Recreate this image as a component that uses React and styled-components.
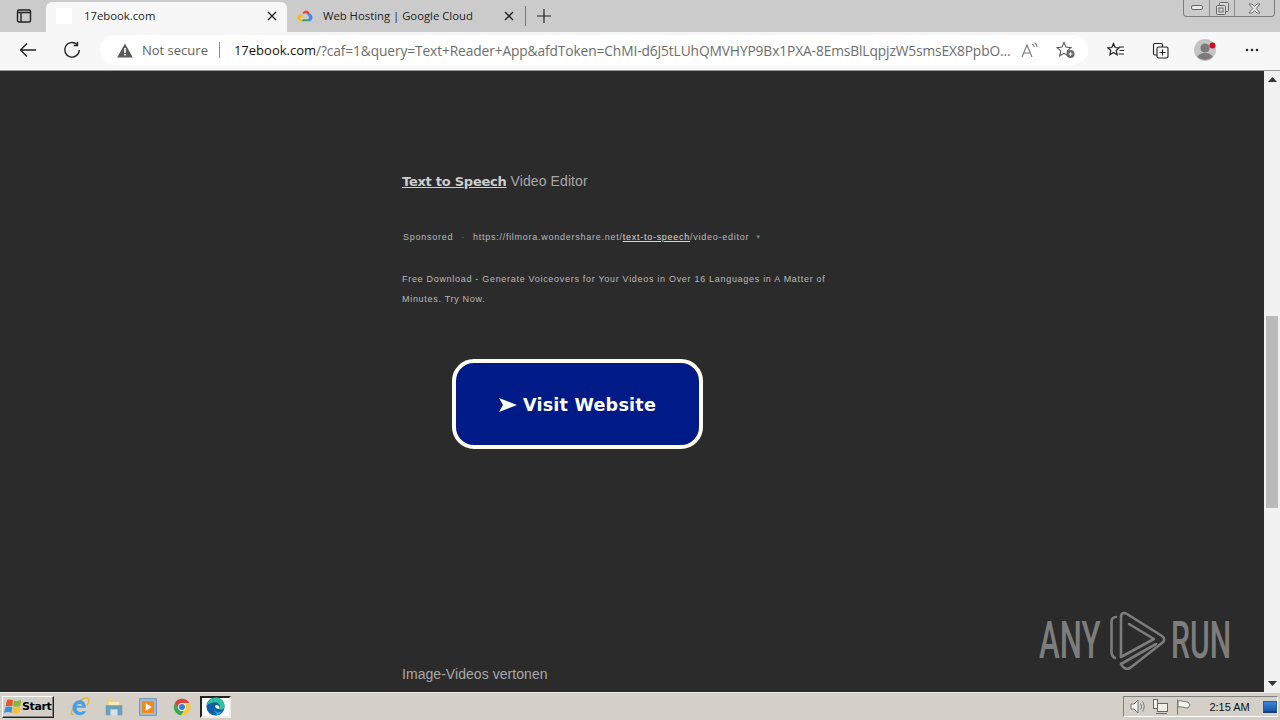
import React from "react";
import styled, { createGlobalStyle } from "styled-components";

const Global = createGlobalStyle`
  html, body {
    margin: 0;
    padding: 0;
    height: 100%;
    overflow: hidden;
    background: #2b2b2b;
  }
  * {
    box-sizing: border-box;
  }
`;

const Screen = styled.div`
  width: 1280px;
  height: 720px;
  display: flex;
  flex-direction: column;
  font-family: "Liberation Sans", Arial, sans-serif;
  overflow: hidden;
`;

const TabStrip = styled.div`
  height: 32px;
  background: #cbcbcb;
  display: flex;
  align-items: flex-end;
  padding-left: 8px;
  position: relative;
`;

const TabAction = styled.div`
  width: 32px;
  height: 30px;
  margin-right: 6px;
  padding-bottom: 3px;
  display: flex;
  align-items: center;
  justify-content: center;
  flex-shrink: 0;
`;

const Tab = styled.div`
  width: ${(p) => p.$w}px;
  height: 30px;
  display: flex;
  align-items: center;
  flex-shrink: 0;
  padding: 0 10px 3px;
  border-radius: 6px 6px 0 0;
  background: ${(p) => (p.$active ? "#f7f7f7" : "transparent")};
  color: #222;
  font-family: "Open Sans", sans-serif;
  font-size: 11.3px;
`;

const TabFavicon = styled.div`
  width: 16px;
  height: 16px;
  flex-shrink: 0;
  background: ${(p) => p.$bg || "transparent"};
  margin-right: ${(p) => p.$gap}px;
  display: flex;
`;

const TabTitle = styled.span`
  flex: 1;
  white-space: nowrap;
`;

const TabDivider = styled.div`
  width: 1px;
  height: 20px;
  margin: 0 0 6px 1px;
  background: #777;
  flex-shrink: 0;
`;

const NewTab = styled.div`
  width: 36px;
  height: 30px;
  padding-bottom: 3px;
  display: flex;
  align-items: center;
  justify-content: center;
`;

const WindowControls = styled.div`
  position: absolute;
  top: 0;
  right: 5px;
  width: 92px;
  height: 17px;
  display: grid;
  grid-template-columns: 25px 25px 1fr;
  border: 1px solid #7c7c7c;
  border-top: none;
  border-radius: 0 0 4px 4px;
`;

const WindowButton = styled.div`
  display: flex;
  align-items: center;
  justify-content: center;
  border-left: ${(p) => (p.$first ? "none" : "1px solid #8c8c8c")};
`;

const Toolbar = styled.div`
  height: 39px;
  background: #f7f7f7;
  border-bottom: 1px solid #9a9a9a;
  display: flex;
  align-items: center;
  padding: 0 12px 2px 12px;
`;

const ToolButton = styled.div`
  width: ${(p) => p.$w || 32}px;
  margin-left: ${(p) => p.$ml || 0}px;
  margin-right: ${(p) => p.$mr || 0}px;
  height: 30px;
  display: flex;
  align-items: center;
  justify-content: center;
  flex-shrink: 0;
`;

const AddressBar = styled.div`
  width: 988px;
  height: 30px;
  margin: 0 12px 0 12px;
  flex-shrink: 0;
  background: #fff;
  border-radius: 15px;
  display: flex;
  align-items: center;
  padding: 0 3px 0 17px;
  font-family: "Open Sans", sans-serif;
  font-size: 13px;
  white-space: nowrap;
`;

const NotSecure = styled.span`
  color: #5f5f5f;
  font-size: 13px;
  margin-left: 9px;
`;

const AddressDivider = styled.div`
  width: 1px;
  height: 16px;
  background: #8d8d8d;
  margin: 0 14px 0 11px;
`;

const Host = styled.span`
  color: #111;
`;

const Query = styled.span`
  color: #6d6d6d;
  flex: 1;
  overflow: hidden;
  font-size: 13.75px;
  letter-spacing: -0.11px;
`;

const Main = styled.div`
  flex: 1;
  min-height: 0;
  display: flex;
  position: relative;
`;

const Page = styled.div`
  flex: 1;
  background: #2b2b2b;
  padding: 101px 0 0 402px;
  color: #cfcfcf;
`;

const Headline = styled.div`
  font-size: 14px;
  line-height: 18px;
  letter-spacing: 0.1px;
  color: #a8a8a8;
`;

const HeadLink = styled.a`
  font-family: "DejaVu Sans", sans-serif;
  font-size: 13px;
  font-weight: 700;
  letter-spacing: -0.25px;
  color: #cdcdcd;
  text-decoration: underline;
`;

const MetaRow = styled.div`
  margin-top: 37px;
  padding-left: 1px;
  display: flex;
  align-items: center;
  height: 18px;
  font-size: 9px;
  letter-spacing: 0.74px;
  color: #b9b9b9;
  white-space: nowrap;
`;

const Dot = styled.span`
  margin: 0 8px;
  color: #777;
`;

const UrlLink = styled.span`
  color: #d6d6d6;
  text-decoration: underline;
`;

const Caret = styled.span`
  margin-left: 6px;
  font-size: 6px;
  color: #6f8a80;
`;

const Description = styled.p`
  margin: 23px 0 0;
  width: 432px;
  font-size: 9px;
  letter-spacing: 0.7px;
  line-height: 20px;
  color: #b9b9b9;
`;

const VisitButton = styled.a`
  margin: 50px 0 0 50px;
  width: 251px;
  height: 90px;
  padding-top: 2px;
  background: #001a87;
  border: 4px solid #fffdf2;
  border-radius: 22px;
  display: flex;
  align-items: center;
  justify-content: center;
  color: #fff;
  font-family: "DejaVu Sans", sans-serif;
  font-weight: 700;
  font-size: 17.6px;
  letter-spacing: 0.2px;
`;

const Arrow = styled.svg`
  margin-right: 6px;
`;

const BottomLink = styled.div`
  margin-top: 216px;
  font-size: 14px;
  line-height: 18px;
  letter-spacing: 0.05px;
  color: #a8a8a8;
`;

const Scrollbar = styled.div`
  width: 16px;
  background: #f1f1f1;
  display: flex;
  flex-direction: column;
  align-items: center;
  position: relative;
`;

const ScrollArrow = styled.div`
  height: 17px;
  display: flex;
  align-items: center;
  justify-content: center;
`;

const ScrollTrack = styled.div`
  flex: 1;
  width: 100%;
  padding: 228px 2px 167px;
  display: flex;
`;

const ScrollThumb = styled.div`
  flex: 1;
  background: #bababa;
`;

const Watermark = styled.div`
  position: absolute;
  left: 1039px;
  top: 539px;
  display: flex;
  align-items: center;
  color: #7d7d7d;
  font-family: "Roboto", sans-serif;
  font-weight: 500;
  font-size: 52px;
  line-height: 62px;
  height: 62px;
`;

const MarkWord = styled.span`
  display: inline-block;
  width: ${(p) => p.$w}px;
  margin-left: ${(p) => p.$ml || 0}px;
  transform: scaleX(${(p) => p.$scale});
  transform-origin: left center;
  white-space: nowrap;
`;

const Taskbar = styled.div`
  height: 28px;
  background: #d4d0c8;
  border-top: 1px solid #efede7;
  display: flex;
  align-items: center;
  padding: 0 2px;
  position: relative;
`;

const StartButton = styled.div`
  width: 52px;
  height: 22px;
  display: flex;
  align-items: center;
  gap: 0;
  padding-left: 1px;
  background: #d4d0c8;
  border: 1px solid;
  border-color: #fff #222 #222 #fff;
  box-shadow: inset -1px -1px 0 #808080;
  font-family: "DejaVu Sans", sans-serif;
  font-weight: 700;
  font-size: 11px;
  color: #000;
  letter-spacing: -0.4px;
`;

const QuickIcons = styled.div`
  display: flex;
  align-items: center;
  margin-left: 9px;
`;

const QuickIcon = styled.div`
  width: ${(p) => (p.$active ? 31 : 34)}px;
  height: ${(p) => (p.$active ? 22 : 24)}px;
  display: flex;
  align-items: center;
  justify-content: center;
  ${(p) =>
    p.$active &&
    `
    background: #fff;
    border: 2px solid;
    border-color: #222 #efede7 #efede7 #222;
    margin-left: 1px;
  `}
`;

const Tray = styled.div`
  margin-left: auto;
  width: 155px;
  height: 21px;
  border: 1px solid;
  border-color: #808080 #fff #fff #808080;
  display: flex;
  align-items: center;
  padding-left: 5px;
  gap: 5px;
`;

const TrayIcon = styled.div`
  width: 20px;
  height: 16px;
  display: flex;
  align-items: center;
  justify-content: center;
`;

const Clock = styled.span`
  margin-left: 13px;
  font-size: 11px;
  font-family: "Liberation Sans", sans-serif;
  color: #111;
  white-space: nowrap;
`;

const Desktop = styled.div`
  width: 16px;
  height: 12px;
  margin-left: 8px;
  background: linear-gradient(#3a86d8, #1a56a8);
  border: 1px solid #2a5d96;
  border-bottom: 2px solid #1f3f70;
`;

const GoogleCloud = () => (
  <svg width="17" height="16" viewBox="0 0 24 22">
    <path d="M8 6 L12 3 C15 2 18 4 19 7 L16 9 C15 7 12 6 10 8z" fill="#ea4335" />
    <path d="M19 7 C22 9 24 12 23 15 C22 18 20 19 18 19 L15 16 C18 16 19 13 16 9z" fill="#4285f4" />
    <path d="M18 19 L7 19 L9 16 L15 16z" fill="#34a853" />
    <path d="M7 19 C3 19 0 16 1 12 C2 9 5 8 8 9 L9 12 C6 11 4 13 5 15 C6 16 8 16 9 16z" fill="#fbbc05" />
  </svg>
);

const EdgeIcon = () => (
  <svg width="19" height="19" viewBox="0 0 24 24">
    <circle cx="12" cy="12" r="11.5" fill="#0e5ea8" />
    <path d="M1 11 C2 4 8 .5 13 .5 C20 .5 23.5 6 23.5 12 C23.5 15 20 17 17 15.5 C19 11 16 6.5 11.5 6.5 C7 6.5 3 8 1 11z" fill="#2fc4a0" />
    <path d="M10 12 C9 17 14 21 21 18 C18 22 15 23.5 12 23.5 C15 20 8 18 10 12z" fill="#1b9de2" />
    <path d="M13 10 C16 10 17 12 17 15 C14 15 12 14 11.5 12 C11.5 11 12 10 13 10z" fill="#fff" />
  </svg>
);

const ChromeIcon = () => (
  <svg width="18" height="18" viewBox="0 0 24 24">
    <path d="M12 1 A11 11 0 0 0 2.5 6.5 L7.5 15 L12 7 L21.6 6.5 A11 11 0 0 0 12 1z" fill="#db4437" />
    <path d="M2.5 6.5 A11 11 0 0 0 11 23 L16 14.5 L7.5 15z" fill="#3aa757" />
    <path d="M21.6 6.5 A11 11 0 0 1 11 23 L16 14.5 L12 7z" fill="#fcc934" />
    <circle cx="12" cy="12" r="5.2" fill="#fff" />
    <circle cx="12" cy="12" r="4" fill="#3b78e7" />
  </svg>
);

const IeIcon = () => (
  <svg width="20" height="20" viewBox="0 0 24 24" fill="none">
    <path d="M5 20 C1 23 0 19 4 13 C9 5 18 -1 22 2 C24 4 22 8 20 10" stroke="#e3b53c" strokeWidth="1.6" />
    <path fillRule="evenodd" d="M4 13 H19 C19 7 16 4 12 4 C7 4 3 8 3 13 C3 18 7 22 12 22 C15 22 18 20 19 17 H14.5 C13 19 8 18.5 8 13z M8 10.5 C8.5 7.5 14.5 7.5 15 10.5z" fill="#4c9fe0" />
  </svg>
);

const FolderIcon = () => (
  <svg width="20" height="20" viewBox="0 0 24 24">
    <path d="M4 2 H11 L13 5 H20 V12 H4z" fill="#eed27a" />
    <path d="M6 6 H18 V11 H6z" fill="#f7eab8" />
    <path d="M2 10 H22 V22 H16 V15 H8 V22 H2z" fill="#6d9fbc" />
    <rect x="8" y="15" width="8" height="7" fill="#d3e3ec" />
  </svg>
);

const MediaIcon = () => (
  <svg width="18" height="18" viewBox="0 0 24 24">
    <rect x="1" y="1" width="22" height="22" fill="#9fc0dc" stroke="#4d7ea8" />
    <rect x="4" y="4" width="16" height="16" fill="#f08a1d" />
    <path d="M9 7 L17 12 L9 17z" fill="#fff" />
  </svg>
);

const WindowsFlag = () => (
  <svg width="18" height="18" viewBox="0 0 24 24">
    <path d="M4 3 C7 1 9 2 12 3 L11 11 C8 10 6 10 2 11z" fill="#e8562a" />
    <path d="M13 3 C16 5 19 4 23 2 L22 10 C19 12 15 12 12 11z" fill="#7fba3a" />
    <path d="M2 12 C5 11 8 11 11 12 L10 20 C7 18 4 18 0 20z" fill="#3b8fe0" />
    <path d="M12 12 C15 13 18 13 22 11 L21 19 C18 21 14 21 11 20z" fill="#f5c02b" />
  </svg>
);

export default function App() {
  return (
    <Screen>
      <Global />
      <TabStrip>
        <TabAction>
          <svg width="16" height="16" viewBox="0 0 16 16" fill="none" stroke="#222" strokeWidth="1.4">
            <rect x="1.5" y="2" width="13" height="12" rx="1.5" />
            <path d="M1.5 4.5h13M5 4.5V14" />
          </svg>
        </TabAction>
        <Tab $active $w={241}>
          <TabFavicon $bg="#fff" $gap={12} />
          <TabTitle>17ebook.com</TabTitle>
          <svg width="10" height="10" viewBox="0 0 10 10" stroke="#222" strokeWidth="1.4">
            <path d="M1 1l8 8M9 1l-8 8" />
          </svg>
        </Tab>
        <Tab $w={237}>
          <TabFavicon $gap={10}>
            <GoogleCloud />
          </TabFavicon>
          <TabTitle>Web Hosting | Google Cloud</TabTitle>
          <svg width="10" height="10" viewBox="0 0 10 10" stroke="#222" strokeWidth="1.4">
            <path d="M1 1l8 8M9 1l-8 8" />
          </svg>
        </Tab>
        <TabDivider />
        <NewTab>
          <svg width="16" height="16" viewBox="0 0 16 16" stroke="#222" strokeWidth="1.2">
            <path d="M8 1v14M1 8h14" />
          </svg>
        </NewTab>
        <WindowControls>
          <WindowButton $first>
            <svg width="12" height="6" viewBox="0 0 12 6" fill="#e9e9e9" stroke="#666">
              <rect x="0.5" y="0.5" width="11" height="4" rx="1.5" />
            </svg>
          </WindowButton>
          <WindowButton>
            <svg width="13" height="13" viewBox="0 0 13 13" fill="#d8d8d8" stroke="#666">
              <rect x="3.5" y="0.5" width="9" height="9" rx="1" />
              <rect x="0.5" y="3.5" width="9" height="9" rx="1" />
              <rect x="3" y="6" width="4" height="4" />
            </svg>
          </WindowButton>
          <WindowButton>
            <svg width="13" height="11" viewBox="0 0 13 11" fill="#e9e9e9" stroke="#666" strokeWidth="0.9">
              <path d="M1 1h3l2.5 2.5L9 1h3L8.2 5.5 12 10H9L6.5 7.5 4 10H1l3.8-4.5z" />
            </svg>
          </WindowButton>
        </WindowControls>
      </TabStrip>

      <Toolbar>
        <ToolButton>
          <svg width="18" height="16" viewBox="0 0 18 16" fill="none" stroke="#222" strokeWidth="1.4">
            <path d="M17 8H1.5M8 1.5L1.5 8 8 14.5" />
          </svg>
        </ToolButton>
        <ToolButton $ml={12}>
          <svg width="18" height="18" viewBox="0 0 18 18" fill="none" stroke="#222" strokeWidth="1.4">
            <path d="M14 3.5A7.3 7.3 0 1 0 16.3 9" />
            <path d="M14.5 0.8v3.7h-3.7" />
          </svg>
        </ToolButton>
        <AddressBar>
          <svg width="16" height="15" viewBox="0 0 16 15">
            <path d="M8 0.5L15.8 14.5H0.2z" fill="#5a5a5a" />
            <path d="M7.2 5h1.6v5H7.2zM7.2 11h1.6v1.6H7.2z" fill="#fff" />
          </svg>
          <NotSecure>Not secure</NotSecure>
          <AddressDivider />
          <Host>17ebook.com</Host>
          <Query>/?caf=1&amp;query=Text+Reader+App&amp;afdToken=ChMI-d6J5tLUhQMVHYP9Bx1PXA-8EmsBlLqpjzW5smsEX8PpbO...</Query>
          <ToolButton $w={34}>
            <svg width="18" height="16" viewBox="0 0 18 16" fill="none" stroke="#777" strokeWidth="1.1">
              <path d="M1 15L6 3l5 12M2.8 11h6.4" />
              <path d="M11 2c1.5.6 2 1.6 2.2 3M13.5.8c1.6 1 2.4 2.2 2.7 4" />
            </svg>
          </ToolButton>
          <ToolButton $w={38}>
            <svg width="20" height="18" viewBox="0 0 20 18">
              <path d="M8 1.5l2 4.6 5 .5-3.8 3.3 1.1 5-4.3-2.6-4.3 2.6 1.1-5L1 6.6l5-.5z" fill="none" stroke="#555" strokeWidth="1.1" />
              <circle cx="14.5" cy="13" r="4" fill="#666" />
              <path d="M14.5 11v4M12.5 13h4" stroke="#fff" strokeWidth="1" />
            </svg>
          </ToolButton>
        </AddressBar>
        <ToolButton $w={32} $mr={12}>
          <svg width="18" height="17" viewBox="0 0 18 17" fill="none" stroke="#222" strokeWidth="1.2">
            <path d="M6.5 1.5l1.7 4 4 .3-3 2.7.9 4.2-3.6-2.2-3.6 2.2.9-4.2-3-2.7 4-.3z" />
            <path d="M12 5h5M12.5 8.5h4.5M11.5 12H17" />
          </svg>
        </ToolButton>
        <ToolButton $w={32} $mr={14}>
          <svg width="17" height="17" viewBox="0 0 17 17" fill="none" stroke="#222" strokeWidth="1.1">
            <rect x="5" y="5" width="11" height="11" rx="1.5" />
            <path d="M10.5 7.5v6M7.5 10.5h6" />
            <path d="M5 13H3a1.5 1.5 0 0 1-1.5-1.5V3A1.5 1.5 0 0 1 3 1.5h6A1.5 1.5 0 0 1 10.5 3v2" />
          </svg>
        </ToolButton>
        <ToolButton $w={32} $mr={14}>
          <svg width="24" height="24" viewBox="0 0 24 24">
            <circle cx="11" cy="12" r="11" fill="#c4c4c4" />
            <circle cx="11" cy="10" r="4.6" fill="#7a7a7a" />
            <path d="M3.5 19C5 15.5 8 15 11 15s6 .5 7.5 4A11 11 0 0 1 3.5 19z" fill="#7a7a7a" />
            <circle cx="18.5" cy="7.5" r="3" fill="#d40b1c" />
          </svg>
        </ToolButton>
        <ToolButton $w={32}>
          <svg width="14" height="4" viewBox="0 0 14 4" fill="#222">
            <circle cx="2" cy="2" r="1.3" />
            <circle cx="7" cy="2" r="1.3" />
            <circle cx="12" cy="2" r="1.3" />
          </svg>
        </ToolButton>
      </Toolbar>

      <Main>
        <Page>
          <Headline>
            <HeadLink>Text to Speech</HeadLink> Video Editor
          </Headline>
          <MetaRow>
            Sponsored<Dot>·</Dot>https://filmora.wondershare.net/
            <UrlLink>text-to-speech</UrlLink>/video-editor<Caret>▼</Caret>
          </MetaRow>
          <Description>
            Free Download - Generate Voiceovers for Your Videos in Over 16 Languages in A Matter of Minutes. Try Now.
          </Description>
          <VisitButton>
            <Arrow width="18" height="14" viewBox="0 0 18 14">
              <path d="M0 0L18 7 0 14 4 7z" fill="#fff" />
            </Arrow>
            Visit Website
          </VisitButton>
          <BottomLink>Image-Videos vertonen</BottomLink>
        </Page>
        <Scrollbar>
          <ScrollArrow>
            <svg width="9" height="5" viewBox="0 0 9 5">
              <path d="M4.5 0L9 5H0z" fill="#333" />
            </svg>
          </ScrollArrow>
          <ScrollTrack>
            <ScrollThumb />
          </ScrollTrack>
          <ScrollArrow>
            <svg width="9" height="5" viewBox="0 0 9 5">
              <path d="M0 0h9L4.5 5z" fill="#333" />
            </svg>
          </ScrollArrow>
        </Scrollbar>
        <Watermark>
          <MarkWord $w={71} $scale={0.6}>ANY</MarkWord>
          <svg width="56" height="62" viewBox="0 0 56 62" fill="none" stroke="#7d7d7d" strokeWidth="2.6" strokeLinejoin="round" strokeLinecap="round">
            <path d="M6 7C3 7 1.5 9 1.5 12V42C1.5 45 3 47 5 48" />
            <path d="M11 7V47" />
            <path d="M11 7C11 3 14 2 17 4L52 26C55 28 55 31 52 33L20 58C16 60 13 58 11 54" />
            <path d="M11 47L44 29 19 14" />
            <path d="M11 54L46 34" />
          </svg>
          <MarkWord $w={52} $ml={5} $scale={0.58}>RUN</MarkWord>
        </Watermark>
      </Main>

      <Taskbar>
        <StartButton>
          <WindowsFlag />
          Start
        </StartButton>
        <QuickIcons>
          <QuickIcon>
            <IeIcon />
          </QuickIcon>
          <QuickIcon>
            <FolderIcon />
          </QuickIcon>
          <QuickIcon>
            <MediaIcon />
          </QuickIcon>
          <QuickIcon>
            <ChromeIcon />
          </QuickIcon>
          <QuickIcon $active>
            <EdgeIcon />
          </QuickIcon>
        </QuickIcons>
        <Tray>
          <TrayIcon>
            <svg width="16" height="15" viewBox="0 0 16 15" fill="#f5f5f0" stroke="#777">
              <path d="M1 5h3l4-4v13l-4-4H1z" />
              <path d="M10.5 4.5c1.3 1.8 1.3 4.2 0 6M12.5 2.5c2.2 3 2.2 7 0 10" fill="none" />
            </svg>
          </TrayIcon>
          <TrayIcon>
            <svg width="17" height="16" viewBox="0 0 17 16" fill="#f0efe9" stroke="#666">
              <rect x="5.5" y="4.5" width="10" height="8" />
              <rect x="1.5" y="0.5" width="4" height="9" />
              <path d="M4 14.5h11" />
            </svg>
          </TrayIcon>
          <TrayIcon>
            <svg width="16" height="16" viewBox="0 0 16 16" fill="#f5f5f0" stroke="#777">
              <path d="M2.5 0.5V15.5" />
              <path d="M3 2c3-1 5 1 10 1l2 3-2 3c-4 0-7-2-10-1z" />
            </svg>
          </TrayIcon>
          <Clock>2:15 AM</Clock>
          <Desktop />
        </Tray>
      </Taskbar>
    </Screen>
  );
}
